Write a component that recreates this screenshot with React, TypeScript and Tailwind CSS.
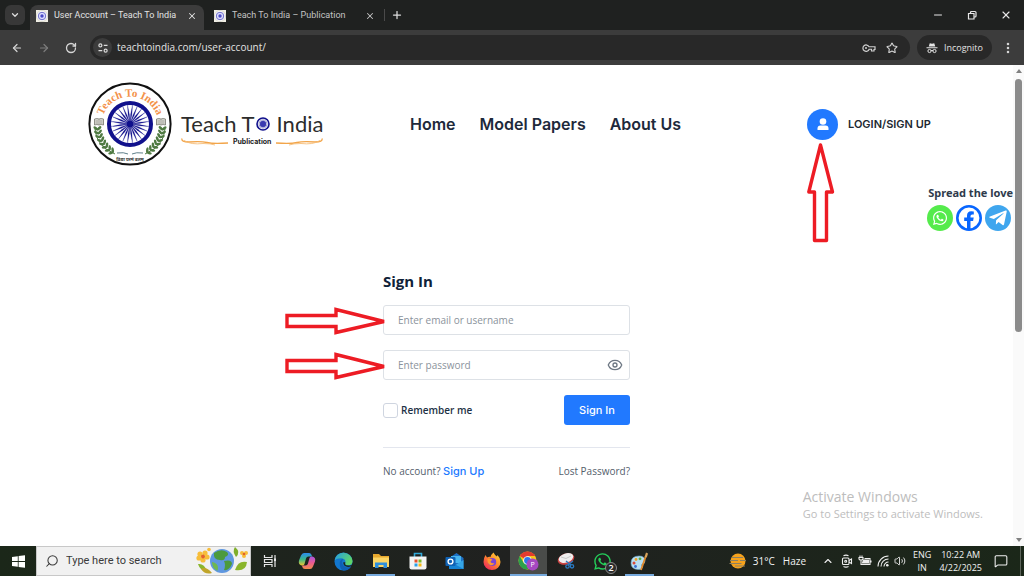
import React from 'react';
import {
  ArrowLeft,
  ArrowRight,
  ChevronDown,
  ChevronUp,
  EllipsisVertical,
  Eye,
  MessageSquare,
  Minus,
  Plus,
  RotateCw,
  Search,
  Star,
  Volume2,
  X,
} from 'lucide-react';
import { FaTelegramPlane, FaWhatsapp } from 'react-icons/fa';

const SPOKES = Array.from({ length: 24 }, (_, i) => i * 15);

/* Ashoka wheel, drawn around 0,0 */
const Wheel: React.FC<{ radius: number; rim: number }> = ({ radius, rim }) => (
  <g stroke="#10108c" fill="none">
    <circle r={radius} strokeWidth={rim} fill="#ffffff" />
    {SPOKES.map((deg) => (
      <path
        key={deg}
        d={`M0 0 L${radius * 0.45} ${radius * 0.03} L${radius - rim / 2} 0 L${radius * 0.45} ${-radius * 0.03}Z`}
        transform={`rotate(${deg + 7.5})`}
        strokeWidth={radius / 90}
        fill="#10108c"
      />
    ))}
    <circle r={radius * 0.14} fill="#10108c" />
  </g>
);

const Favicon = () => (
  <svg viewBox="-12 -12 24 24" className="size-3 shrink-0">
    <rect x="-12" y="-12" width="24" height="24" fill="#f1efe6" />
    <circle r="11" fill="#ffffff" stroke="#b9b6a4" strokeWidth="1" />
    <circle r="7.500" fill="#dcdcff" stroke="#6c6cc8" strokeWidth="2" />
    <circle r="3.400" fill="#4a4ac4" />
  </svg>
);

const BRANCH = [0, 1, 2, 3, 4, 5, 6, 7];

const Laurel = () => (
  <g fill="#4f7a42">
    <path d="M-35 5 Q-34 22 -15 30" fill="none" stroke="#4f7a42" strokeWidth="1" />
    {BRANCH.map((i) => {
      const a = ((170 - i * 7) * Math.PI) / 180;
      const x = Math.cos(a) * 33;
      const y = Math.sin(a) * 33;
      return (
        <g key={i} transform={`translate(${x} ${y}) rotate(${-i * 8})`}>
          <ellipse cx="-2.200" cy="0" rx="2.800" ry="1.300" transform="rotate(38)" />
          <ellipse cx="2.200" cy="0" rx="2.800" ry="1.300" transform="rotate(-42)" />
        </g>
      );
    })}
  </g>
);

const Book = () => (
  <g>
    <path d="M-4.500 -3 Q-2 -4 0 -3 Q2 -4 4.500 -3 V3 Q2 2 0 3 Q-2 2 -4.500 3Z" fill="#d6d6d0" stroke="#77776f" strokeWidth="0.800" />
    <path d="M0 -3V3M-3.400 -1h2.400M-3.400 1h2.400M1 -1h2.400M1 1h2.400" stroke="#8a8a82" strokeWidth="0.600" />
  </g>
);

const Emblem = () => (
  <svg viewBox="-42 -42 84 84" className="size-[84px] shrink-0">
    <circle r="40.600" fill="#ffffff" stroke="#111111" strokeWidth="2" />
    <defs>
      <path id="emblem-arc" d="M-28.500 1 A28.500 28.500 0 1 1 28.500 1" />
    </defs>
    <text fill="#f3924a" fontSize="11" fontWeight="700" fontFamily="'Liberation Serif', serif" textAnchor="middle">
      <textPath href="#emblem-arc" startOffset="50%">Teach To India</textPath>
    </text>
    <Laurel />
    <g transform="scale(-1 1)">
      <Laurel />
    </g>
    <g transform="translate(-31 -2)"><Book /></g>
    <g transform="translate(31 -2)"><Book /></g>
    <Wheel radius={21} rim={4} />
    <path d="M-13 29 Q-6 28 -2 30 M13 29 Q6 28 2 30" stroke="#5f7f8a" strokeWidth="1" fill="none" />
    <text y="36.500" fontSize="4.500" fontWeight="700" fill="#333333" textAnchor="middle" fontFamily="'Noto Sans', sans-serif">
      विद्या परमं बलम्
    </text>
  </svg>
);

const Flourish: React.FC<{ flip?: boolean }> = ({ flip }) => (
  <svg viewBox="0 0 48 8" className={flip ? 'h-2 w-12 -scale-x-100' : 'h-2 w-12'}>
    <path d="M1 0.500 Q0 4 8 4 Q20 3 26 4.500 T47 5" fill="none" stroke="#f2a54a" strokeWidth="1.300" />
    <path d="M3 2.500 Q10 7 22 5.500 Q30 5.500 34 7" fill="none" stroke="#f6bd78" strokeWidth="0.900" />
  </svg>
);

const Logo = () => (
  <a href="#home" className="flex items-center gap-[9px]">
    <Emblem />
    <span className="mt-2 flex flex-col">
      <span className="flex items-center font-['Lato',sans-serif] text-[22px] leading-7 text-[#2c2c2c] whitespace-nowrap">
        Teach T
        <svg viewBox="-8 -8 16 16" className="size-4">
          <Wheel radius={6} rim={1.6} />
          <circle r="3" fill="#3a3ab0" />
        </svg>
        <span className="ml-1.5">India</span>
      </span>
      <span className="flex items-center justify-between gap-0.5 font-['Inter',sans-serif] text-[7px] leading-2 font-bold text-[#222222]">
        <Flourish />
        Publication
        <Flourish flip />
      </span>
    </span>
  </a>
);

/* Block arrow pointing right */
const ArrowMark: React.FC<{ className: string }> = ({ className }) => (
  <svg viewBox="0 0 102 28" className={className} fill="none" stroke="#ed1c24" strokeWidth="3.400">
    <path d="M2 8.500H51V2.500L99 14.500L51 25.500V19.500H2Z" />
  </svg>
);

const TuneIcon = () => (
  <svg viewBox="0 0 16 16" className="size-3" fill="none" stroke="#dddddd" strokeWidth="1.600">
    <circle cx="4.500" cy="4.500" r="2" />
    <path d="M9 4.500h5M2 11.500h5" />
    <circle cx="11.500" cy="11.500" r="2" />
  </svg>
);

const KeyIcon = () => (
  <svg viewBox="0 0 28 16" className="h-2 w-3.5" fill="none" stroke="#d0d0d0" strokeWidth="2.400">
    <path d="M14 5.500H26V11H24V14H19V10.500H14.300A6.400 6.400 0 1 1 14 5.500Z" />
    <circle cx="8" cy="8" r="2" fill="#d0d0d0" stroke="none" />
  </svg>
);

const RestoreIcon = () => (
  <svg viewBox="0 0 10 10" className="size-2.5" fill="none" stroke="currentColor" strokeWidth="1.200">
    <path d="M1.500 3.500h5.500v5.500h-5.500ZM3.500 3.500V2.500Q3.500 1.500 4.500 1.500H8Q9 1.500 9 2.500V6Q9 7 8 7H7" />
  </svg>
);

const IncognitoIcon = () => (
  <svg viewBox="0 0 24 24" className="size-3" fill="#e4e4e4">
    <path d="M7.500 2.500 12 3.600 16.500 2.500 18.500 9H5.500Z" />
    <path d="M1 10.500h22v2H1Z" />
    <circle cx="7" cy="18" r="3.200" fill="none" stroke="#e4e4e4" strokeWidth="2" />
    <circle cx="17" cy="18" r="3.200" fill="none" stroke="#e4e4e4" strokeWidth="2" />
    <path d="M10 17.500q2-1.500 4 0" fill="none" stroke="#e4e4e4" strokeWidth="2" />
  </svg>
);

const TabStrip = () => (
  <div className="flex h-[30px] items-end bg-[#1f2120] font-['Roboto',sans-serif] text-[9px]">
    <button aria-label="Search tabs" className="mb-[5px] ml-[5px] flex size-5 items-center justify-center rounded-md bg-[#383838] text-[#dddddd]">
      <ChevronDown className="size-2.5" strokeWidth={3} />
    </button>
    <div className="ml-[5px] flex h-[25px] w-[174px] items-center rounded-t-lg bg-[#3c3c3c] pr-[7px] pb-1 pl-1.5 text-[#e3e3e3]">
      <Favicon />
      <span className="ml-1.5 flex-1 whitespace-nowrap">User Account – Teach To India</span>
      <button aria-label="Close tab"><X className="size-2.5" strokeWidth={2.5} /></button>
    </div>
    <div className="flex h-[25px] w-[180px] items-center pr-[9px] pb-1 pl-2.5 text-[#c4c4c4]">
      <Favicon />
      <span className="ml-1.5 flex-1 whitespace-nowrap">Teach To India – Publication</span>
      <button aria-label="Close tab"><X className="size-2.5" strokeWidth={2.5} /></button>
    </div>
    <span className="mb-[9px] h-3 w-px bg-[#4a4a4a]" />
    <button aria-label="New tab" className="mb-[9px] ml-1.5 text-[#dddddd]">
      <Plus className="size-3" strokeWidth={2.5} />
    </button>
    <div className="mb-[9px] ml-auto flex items-center gap-[23px] pr-3 text-[#e8e8e8]">
      <button aria-label="Minimize"><Minus className="size-3" strokeWidth={2} /></button>
      <button aria-label="Restore"><RestoreIcon /></button>
      <button aria-label="Close"><X className="size-3" strokeWidth={2.2} /></button>
    </div>
  </div>
);

const Toolbar = () => (
  <div className="flex h-[35px] items-center bg-[#3c3c3c] pr-[9px] pl-[11px] text-[#d6d6d6]">
    <button aria-label="Back"><ArrowLeft className="size-3" strokeWidth={2.4} /></button>
    <button aria-label="Forward" className="ml-[15px] text-[#7d7d7d]"><ArrowRight className="size-3" strokeWidth={2.4} /></button>
    <button aria-label="Reload" className="ml-[15px]"><RotateCw className="size-3" strokeWidth={2.6} /></button>
    <div className="ml-[13px] flex h-[25px] flex-1 items-center rounded-full bg-[#282828] pr-3 pl-[3px]">
      <button aria-label="Site information" className="flex size-[19px] items-center justify-center rounded-full bg-[#3c3c3c]">
        <TuneIcon />
      </button>
      <input
        type="text"
        aria-label="Address"
        defaultValue="teachtoindia.com/user-account/"
        className="ml-[5px] min-w-0 flex-1 text-[10px] text-[#e3e3e3] outline-none"
      />
      <button aria-label="Passwords"><KeyIcon /></button>
      <button aria-label="Bookmark" className="ml-2.5"><Star className="size-3" strokeWidth={2.2} /></button>
    </div>
    <button className="mx-[7px] flex h-[25px] items-center gap-1.5 rounded-full bg-[#282828] px-[9px] text-[9px] text-[#e3e3e3]">
      <IncognitoIcon />
      Incognito
    </button>
    <button aria-label="Menu" className="ml-0.5"><EllipsisVertical className="size-3.5" strokeWidth={2.4} /></button>
  </div>
);

const SiteHeader = () => (
  <header className="grid grid-cols-[minmax(0,322fr)_minmax(0,397fr)_minmax(0,121fr)] items-center pt-[17px] pr-[85px] pl-[88px] font-['Inter',sans-serif]">
    <Logo />
    <nav className="flex gap-6 text-[16px] font-semibold whitespace-nowrap text-[#1e293b]">
      <a href="#home">Home</a>
      <a href="#papers">Model Papers</a>
      <a href="#about">About Us</a>
    </nav>
    <a href="#login" className="relative flex items-center gap-2.5 text-[11px] font-semibold whitespace-nowrap text-[#222831]">
      <span className="flex size-[31px] shrink-0 items-center justify-center rounded-full bg-[#2179ff]">
        <svg viewBox="0 0 12 13" className="h-[13px] w-3" fill="#ffffff">
          <circle cx="6" cy="3.500" r="3.300" />
          <path d="M0.500 12V10.500Q0.500 7.500 3.500 7.500H8.500Q11.500 7.500 11.500 10.500V12Z" />
        </svg>
      </span>
      LOGIN/SIGN UP
      <svg viewBox="0 0 28 102" className="absolute top-8 left-0 h-[102px] w-7" fill="none" stroke="#ed1c24" strokeWidth="3.400" strokeLinejoin="round">
        <path d="M13.500 4L25.500 51H19.500V99.500H7.500V51H1.800Z" />
      </svg>
    </a>
  </header>
);

const ShareWidget = () => (
  <aside className="absolute top-[120px] right-0 flex flex-col items-end">
    <p className="font-['Noto_Sans',sans-serif] text-[11px] leading-4 font-bold text-[#2f3b4c]">Spread the love</p>
    <div className="mt-1 mr-0.5 flex gap-[3px]">
      <a href="#whatsapp" aria-label="WhatsApp" className="flex size-[26px] items-center justify-center rounded-full bg-[#55eb4c] text-white">
        <FaWhatsapp className="size-4" />
      </a>
      <a href="#facebook" aria-label="Facebook">
        <svg viewBox="0 0 26 26" className="size-[26px]">
          <circle cx="13" cy="13" r="11.700" fill="#ffffff" stroke="#0866ff" strokeWidth="2.600" />
          <path d="M11 24V16H8.200V12.600H11V10.800Q11 6.300 15.200 6.300Q16.800 6.300 17.800 6.600V9.500H16.200Q14.500 9.500 14.500 11.200V12.600H17.700L17.100 16H14.500V24Z" fill="#0866ff" />
        </svg>
      </a>
      <a href="#telegram" aria-label="Telegram" className="flex size-[26px] items-center justify-center rounded-full bg-[#3fa6ee] text-white">
        <FaTelegramPlane className="size-5" />
      </a>
    </div>
  </aside>
);

const FIELD =
  'h-[30px] w-full rounded-[3px] border border-[#dde1e6] bg-white px-3.5 text-[10px] text-[#44505c] outline-none placeholder:text-[#8b939c]';

const SignInForm = () => (
  <form className="mx-auto mt-[105px] w-[247px] text-[10px]" onSubmit={(e) => e.preventDefault()}>
    <h1 className="text-[15px] leading-5 font-bold text-[#0f2239]">Sign In</h1>
    <div className="relative mt-3.5">
      <input type="text" aria-label="Email or username" placeholder="Enter email or username" className={FIELD} />
      <ArrowMark className="absolute top-0.5 -left-[98px] h-7 w-[102px]" />
    </div>
    <div className="relative mt-[15px]">
      <input type="password" aria-label="Password" placeholder="Enter password" className={FIELD} />
      <button type="button" aria-label="Show password" className="absolute top-[7px] right-[7px] text-[#6d7783]">
        <Eye className="size-4" strokeWidth={2} />
      </button>
      <ArrowMark className="absolute top-0.5 -left-[98px] h-7 w-[102px]" />
    </div>
    <div className="mt-[15px] flex items-center justify-between">
      <label className="flex items-center gap-[3px] font-semibold text-[#1d3145]">
        <input type="checkbox" className="size-[15px] appearance-none rounded-[3px] border border-[#cfd5e0] bg-white checked:bg-[#2179ff]" />
        Remember me
      </label>
      <button type="submit" className="h-[30px] w-[66px] rounded-[3px] bg-[#2179ff] font-['Inter',sans-serif] text-[11px] font-medium text-white">
        Sign In
      </button>
    </div>
    <div className="mt-[22px] flex items-center justify-between border-t border-[#e3e6ee] pt-[15px] font-medium text-[#54606c]">
      <p>
        No account?{' '}
        <a href="#signup" className="font-['Inter',sans-serif] text-[11px] text-[#2179ff]">Sign Up</a>
      </p>
      <a href="#lost">Lost Password?</a>
    </div>
  </form>
);

const ScrollBar = () => (
  <div className="flex w-[11px] shrink-0 flex-col items-center bg-[#fafafa] py-1">
    <span className="border-x-[3px] border-b-4 border-x-transparent border-b-[#808080]" />
    <span className="mt-1.5 h-[253px] w-[7px] rounded-full bg-[#8b8b8b]" />
    <span className="mt-auto border-x-[3px] border-t-4 border-x-transparent border-t-[#808080]" />
  </div>
);

const SearchArt = () => (
  <svg viewBox="0 0 54 28" className="h-7 w-[54px]">
    <g fill="#f7bd3a">
      <circle cx="4" cy="7" r="2.600" /><circle cx="9" cy="6" r="2.600" /><circle cx="11" cy="10" r="2.600" />
      <circle cx="7" cy="13" r="2.600" /><circle cx="3" cy="11" r="2.600" /><circle cx="13" cy="2.500" r="1.800" />
      <circle cx="46" cy="6" r="2" /><circle cx="50" cy="6" r="2" /><circle cx="48" cy="9" r="2" />
    </g>
    <circle cx="7" cy="9.500" r="2" fill="#e2622a" />
    <circle cx="48" cy="7" r="1.300" fill="#e2622a" />
    <path d="M2 17Q8 16 11 24Q4 24 2 17Z" fill="#8ab52c" />
    <path d="M5 22Q10 19 16 26Q9 28 5 22Z" fill="#c0a52a" />
    <path d="M40 10Q36 4 39 0Q45 5 40 10Z" fill="#7fae2b" />
    <path d="M39 23Q42 13 51 15Q50 25 39 23Z" fill="#8ab52c" />
    <circle cx="26" cy="14" r="12" fill="#5f97e0" />
    <path d="M18 6Q25 1 31 5Q34 8 29 10Q29 14 24 13Q17 13 18 6Z" fill="#4c9a3d" />
    <path d="M28 14Q36 12 36 17Q33 24 28 23Q30 18 28 14Z" fill="#4c9a3d" />
    <path d="M16 15Q22 16 22 21Q22 25 20 23Q16 20 16 15Z" fill="#6fb850" />
  </svg>
);

const TaskViewIcon = () => (
  <svg viewBox="0 0 14 14" className="size-3.5" fill="none" stroke="#e6e6e6" strokeWidth="1.200">
    <path d="M1.500 1V3.500H9V1M1.500 13V10.500H9V13M1.500 5.500H9V8.500H1.500Z" />
    <path d="M12 1V13M12 4V6.500" />
    <path d="M11 4.500h2v2.500h-2Z" fill="#e6e6e6" stroke="none" />
  </svg>
);

const CopilotIcon = () => (
  <svg viewBox="0 0 18 18" className="size-[18px]">
    <defs>
      <linearGradient id="cop-a" x1="0" y1="0" x2="0" y2="1">
        <stop offset="0" stopColor="#2b8cf0" /><stop offset="0.500" stopColor="#39b98a" /><stop offset="1" stopColor="#f0c52e" />
      </linearGradient>
      <linearGradient id="cop-b" x1="0" y1="0" x2="0" y2="1">
        <stop offset="0" stopColor="#a657e0" /><stop offset="0.500" stopColor="#ea5a92" /><stop offset="1" stopColor="#f28b4b" />
      </linearGradient>
    </defs>
    <path d="M6 1H11Q13.500 1 14 4.500H10.500Q8.500 4.500 8 6.500L6.500 12Q6 14 3.500 13.500Q0 12.500 1 8.500L3 3.500Q4 1 6 1Z" fill="url(#cop-a)" />
    <path d="M12 17H7Q4.500 17 4 13.500H7.500Q9.500 13.500 10 11.500L11.500 6Q12 4 14.500 4.500Q18 5.500 17 9.500L15 14.500Q14 17 12 17Z" fill="url(#cop-b)" />
  </svg>
);

const EdgeIcon = () => (
  <svg viewBox="0 0 20 20" className="size-[19px]">
    <defs>
      <linearGradient id="edge-top" x1="0" y1="0" x2="1" y2="0.500">
        <stop offset="0" stopColor="#249de6" /><stop offset="1" stopColor="#5fd668" />
      </linearGradient>
    </defs>
    <circle cx="10" cy="10" r="9.500" fill="#1277cf" />
    <path d="M0.600 9A9.500 9.500 0 0 1 19.500 9.500Q19.500 14 15 14Q11 14 12 11Q12.500 7 7.500 6.500Q2.500 6.500 0.600 9Z" fill="url(#edge-top)" />
    <path d="M6 12Q6 8 9.500 7Q6.500 14 13 16Q16 16.500 18 15Q15 20 10 19.500Q6 18 6 12Z" fill="#0f5fb4" />
    <path d="M12 11Q10.500 14 15 14.200Q19 14 19.500 12.500L18.600 14.800Q14 17 10.800 14.300Q9.300 12.500 10 10.500Z" fill="#1d2620" />
  </svg>
);

const ExplorerIcon = () => (
  <svg viewBox="0 0 18 16" className="h-4 w-[18px]">
    <path d="M1 1H7L9 3H17V14H1Z" fill="#e8a92e" />
    <path d="M1 4.500H17V14H1Z" fill="#fbd565" />
    <path d="M3 15V9.500H15V15H11.500V12H6.500V15Z" fill="#2e8fdc" />
  </svg>
);

const StoreIcon = () => (
  <svg viewBox="0 0 18 18" className="size-[18px]">
    <path d="M5.500 5V1.500H12.500V5" fill="none" stroke="#31a8d8" strokeWidth="1.600" />
    <path d="M0.500 4.500H17.500V15.500Q17.500 17.500 15.500 17.500H2.500Q0.500 17.500 0.500 15.500Z" fill="#f4f4f4" />
    <path d="M5.500 7.500h3v3h-3Z" fill="#e8502a" /><path d="M9.500 7.500h3v3h-3Z" fill="#7cb928" />
    <path d="M5.500 11.500h3v3h-3Z" fill="#2aa1e8" /><path d="M9.500 11.500h3v3h-3Z" fill="#f7b916" />
  </svg>
);

const OutlookIcon = () => (
  <svg viewBox="0 0 19 18" className="h-[18px] w-[19px]">
    <path d="M4 6 11.500 1 18.500 6V17H4Z" fill="#1c6fc4" />
    <path d="M6 4H16V11H6Z" fill="#48b5ee" />
    <path d="M4 17 18.500 8V17Z" fill="#35a5e6" /><path d="M4 9 18.500 17H4Z" fill="#1683d4" />
    <rect x="0.500" y="5" width="10" height="9" rx="1" fill="#0f62b5" />
    <circle cx="5.500" cy="9.500" r="2.400" fill="none" stroke="#ffffff" strokeWidth="1.400" />
  </svg>
);

const FirefoxIcon = () => (
  <svg viewBox="0 0 18 18" className="size-[18px]">
    <defs>
      <linearGradient id="fox" x1="1" y1="0" x2="0.200" y2="1">
        <stop offset="0" stopColor="#ffe13e" /><stop offset="0.500" stopColor="#ff8a2b" /><stop offset="1" stopColor="#f0265c" />
      </linearGradient>
    </defs>
    <path d="M2.500 3 4 5.500Q6 4.500 7.500 5Q8 2.500 10.500 0.500Q11.500 3 14 4.500L14.500 3Q17.500 6 17.500 10A8.500 8 0 0 1 0.500 10Q0.500 6 2.500 3Z" fill="url(#fox)" />
    <circle cx="9.200" cy="10" r="4" fill="#7a43d6" />
    <path d="M4.500 7Q8 6 9.500 8Q7.500 8.500 7.500 10Q9 12 11.500 11Q10 14 7 13Q4 11 4.500 7Z" fill="#ff9a2e" />
  </svg>
);

const ChromeIcon = () => (
  <svg viewBox="0 0 22 20" className="h-5 w-[22px]">
    <circle cx="9.500" cy="9.500" r="9" fill="#f8c51c" />
    <path d="M9.500 9.500 1.700 5A9 9 0 0 1 17.300 5H9.500Z" fill="#e33b2e" />
    <path d="M1.700 5A9 9 0 0 0 9.500 18.500L13.400 11.700 5.600 11.700Z" fill="#2da14b" />
    <circle cx="9.500" cy="9.500" r="4.300" fill="#ffffff" /><circle cx="9.500" cy="9.500" r="3.400" fill="#2f77e8" />
    <circle cx="14.500" cy="13.500" r="6" fill="#a648c2" />
    <text x="14.500" y="16" fontSize="7" fill="#ffffff" textAnchor="middle" fontFamily="'Open Sans', sans-serif">P</text>
  </svg>
);

const SnipIcon = () => (
  <svg viewBox="0 0 18 18" className="size-[18px]">
    <ellipse cx="9" cy="7" rx="8.500" ry="5.500" fill="#c94343" transform="rotate(-18 9 7)" />
    <ellipse cx="9" cy="6" rx="7.500" ry="4.500" fill="#eeeeee" transform="rotate(-18 9 6)" />
    <path d="M4 5 9 6.500 14 4" stroke="#c9c9c9" fill="none" />
    <g fill="none" stroke="#2a7ac2" strokeWidth="1.300">
      <path d="M9 9 14 13M16 9 11 13" /><circle cx="10.500" cy="14.500" r="1.700" /><circle cx="15" cy="14.300" r="1.700" />
    </g>
  </svg>
);

const PaintIcon = () => (
  <svg viewBox="0 0 19 19" className="size-[19px]">
    <path d="M1 11Q1 4 9 4Q15 4 15 9Q15 12 12 12Q11 13 12.500 15Q12 18 8 17.500Q1 17 1 11Z" fill="#b9dff2" stroke="#6aa7c8" strokeWidth="0.600" />
    <circle cx="4" cy="11" r="1.500" fill="#d94b3b" /><circle cx="6" cy="7.500" r="1.400" fill="#e9a22a" />
    <circle cx="10" cy="6.800" r="1.400" fill="#55aa44" /><circle cx="5.500" cy="14.500" r="1.400" fill="#3a6ed0" />
    <path d="M11 18 15.500 5" stroke="#e38a2c" strokeWidth="1.800" /><path d="M14.500 5 16 0.500 18 1.500 16.800 5.500Z" fill="#d7a25b" />
  </svg>
);

const WhatsAppTask = () => (
  <span className="relative flex">
    <FaWhatsapp className="size-[19px] text-[#25d05b]" />
    <span className="absolute -right-[5px] -bottom-[3px] flex size-3 items-center justify-center rounded-full border border-[#8a8a8a] bg-[#2c2c2c] text-[9px] leading-3 font-semibold text-white">2</span>
  </span>
);

const TASKS = [
  { name: 'Task View', icon: <TaskViewIcon />, className: '' },
  { name: 'Copilot', icon: <CopilotIcon />, className: '' },
  { name: 'Edge', icon: <EdgeIcon />, className: '' },
  { name: 'File Explorer', icon: <ExplorerIcon />, className: 'after:absolute after:inset-x-1 after:bottom-0 after:h-0.5 after:bg-[#76a9dc]' },
  { name: 'Store', icon: <StoreIcon />, className: '' },
  { name: 'Outlook', icon: <OutlookIcon />, className: '' },
  { name: 'Firefox', icon: <FirefoxIcon />, className: '' },
  { name: 'Chrome', icon: <ChromeIcon />, className: 'bg-[#4a4c4a] after:absolute after:inset-x-0 after:bottom-0 after:h-0.5 after:bg-[#76a9dc]' },
  { name: 'Snipping Tool', icon: <SnipIcon />, className: '' },
  { name: 'WhatsApp', icon: <WhatsAppTask />, className: '' },
  { name: 'Paint', icon: <PaintIcon />, className: 'after:absolute after:inset-x-1 after:bottom-0 after:h-0.5 after:bg-[#76a9dc]' },
];

const HazeIcon = () => (
  <svg viewBox="0 0 18 18" className="size-[18px]">
    <circle cx="9" cy="9" r="7.500" fill="#f6a21c" />
    <path d="M3 5.500h11M1 8.500h8M11 8.500h6M0.500 11.500h12M6 14h10" stroke="#8b8064" strokeWidth="1.200" />
  </svg>
);

const TrayIcons = () => (
  <div className="flex items-center gap-[5px] text-[#eeeeee]">
    <ChevronUp className="mr-0.5 size-3" strokeWidth={2.2} />
    <svg viewBox="0 0 12 14" className="h-3.5 w-3" fill="none" stroke="currentColor" strokeWidth="1.100">
      <rect x="1.500" y="4" width="6.500" height="6.500" rx="1" />
      <path d="M8 6.500 10.500 5V9.500L8 8M2.500 1.800Q5 0.500 7.500 1.800M2.500 12.500Q5 13.700 7.500 12.500" />
      <circle cx="4.700" cy="7.200" r="1" />
    </svg>
    <svg viewBox="0 0 14 12" className="h-3 w-3.5" fill="none" stroke="currentColor" strokeWidth="1.100">
      <path d="M2 0.500V2.500M4 0.500V2.500M1 2.500H5V4Q5 5 3 5T1 4ZM3 5V9.500H12V3.500H6.500M13 5.500V7.500" />
      <path d="M5.500 5h5v3h-6Z" fill="currentColor" />
    </svg>
    <svg viewBox="0 0 12 12" className="size-3" fill="none" stroke="currentColor" strokeWidth="1.100">
      <path d="M1 11.500A10.500 10.500 0 0 1 11.500 1M4 11.500A7.500 7.500 0 0 1 11.500 4M7 11.500A4.500 4.500 0 0 1 11.500 7" />
      <circle cx="10.300" cy="10.300" r="1.300" fill="currentColor" stroke="none" />
    </svg>
    <Volume2 className="size-3" strokeWidth={1.8} />
  </div>
);

const Taskbar = () => (
  <footer className="flex h-[30px] shrink-0 items-stretch bg-linear-to-r from-[#1b2719] via-[#202120] to-[#1b2719] text-[10px] text-[#f2f2f2]">
    <button aria-label="Start" className="flex w-9 items-center justify-center">
      <svg viewBox="0 0 13 13" className="size-[13px]" fill="#ffffff">
        <path d="M0 2 5.800 1.200V6.100H0ZM6.600 1.100 13 0.200V6.100H6.600ZM0 6.900H5.800V11.800L0 11ZM6.600 6.900H13V12.800L6.600 11.900Z" />
      </svg>
    </button>
    <label className="flex w-[215px] items-center border border-[#c8c8c8] bg-[#f1f1f1] pl-2 text-[#3a3a3a]">
      <Search className="size-3.5 -scale-x-100" strokeWidth={1.8} />
      <input
        type="text"
        aria-label="Search"
        placeholder="Type here to search"
        className="ml-[7px] min-w-0 flex-1 font-['Roboto',sans-serif] text-[11px] outline-none placeholder:text-[#3a3a3a]"
      />
      <SearchArt />
    </label>
    {TASKS.map((task) => (
      <button key={task.name} aria-label={task.name} className={`relative flex w-[37px] items-center justify-center ${task.className}`}>
        {task.icon}
      </button>
    ))}
    <div className="ml-auto flex items-center">
      <HazeIcon />
      <span className="ml-1.5 whitespace-nowrap">31°C</span>
      <span className="mr-4 ml-2">Haze</span>
      <TrayIcons />
      <span className="ml-[7px] text-center text-[9px] leading-[13px]">ENG<br />IN</span>
      <span className="ml-2 text-center text-[9px] leading-[13px] whitespace-nowrap">10:22 AM<br />4/22/2025</span>
      <MessageSquare className="mr-3 ml-3 size-3.5" strokeWidth={1.8} />
      <span className="mr-[3px] h-[30px] w-px bg-[#5d655b]" />
    </div>
  </footer>
);

const App: React.FC = () => {
  return (
    <div className="flex min-h-screen flex-col bg-white font-['Open_Sans','Noto_Sans',sans-serif]">
      <TabStrip />
      <Toolbar />
      <div className="flex flex-1">
        <main className="relative flex-1">
          <SiteHeader />
          <ShareWidget />
          <SignInForm />
          <div className="absolute right-[30px] bottom-[25px] text-[#bdbdbd]">
            <p className="text-[14px] leading-5">Activate Windows</p>
            <p className="text-[11px] leading-[14px]">Go to Settings to activate Windows.</p>
          </div>
        </main>
        <ScrollBar />
      </div>
      <Taskbar />
    </div>
  );
};

export default App;
